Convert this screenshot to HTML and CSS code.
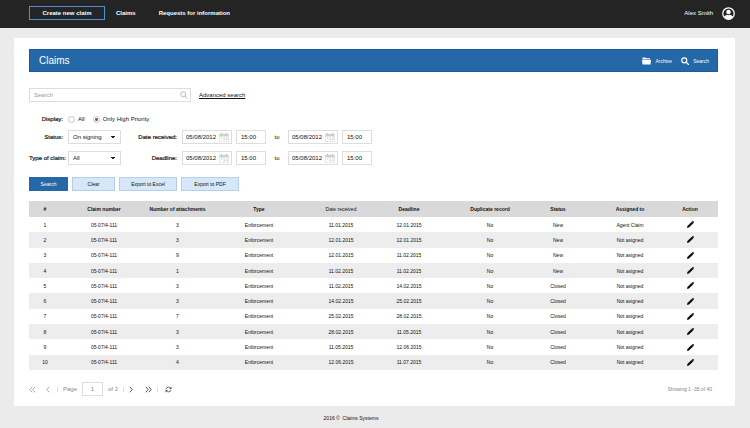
FILE: index.html
```html
<!DOCTYPE html>
<html lang="en">
<head>
  <meta charset="UTF-8">
  <meta name="viewport" content="width=device-width, initial-scale=1.0">
  <title>Claims</title>
  <link rel="stylesheet" href="styles.css">
</head>
<body>
  <!-- Shared icons -->
  <svg class="sprite" aria-hidden="true">
    <symbol id="magnifier" viewBox="0 0 16 16">
      <circle cx="6.5" cy="6.5" r="5" fill="none" stroke="currentColor"/>
      <path d="M10.2 10.2L15 15" stroke="currentColor" stroke-linecap="round"/>
    </symbol>
    <symbol id="calendar" viewBox="0 0 20 18">
      <path d="M1 2h18v15H1z" fill="#fff" stroke="#d0d0d0"/>
      <path d="M1 2h18v5H1z" fill="#d0d0d0"/>
      <path d="M5 0v3M15 0v3" stroke="#c4c4c4" stroke-width="2"/>
      <path d="M4 10h3M9 10h3M14 10h3M9 13h3M14 13h3" stroke="#ccc" stroke-width="2"/>
    </symbol>
    <symbol id="pencil" viewBox="0 0 16 16">
      <path d="M0.500 15.500L1.500 11.500 11 2 14 5 4.500 14zM11.800 1.500L13 0.500Q13.800 0 14.600 0.700L15.400 1.500Q16 2.300 15.400 3.100L14.500 4.200z" fill="#000" stroke="#000"/>
    </symbol>
    <symbol id="chevron" viewBox="0 0 8 14">
      <path d="M1.500 1.500L6.500 7l-5 5.500" fill="none" stroke="currentColor" stroke-width="2"/>
    </symbol>
    <symbol id="double-chevron" viewBox="0 0 14 14">
      <path d="M1.500 1.500L6.500 7l-5 5.500M7.500 1.500l5 5.500-5 5.500" fill="none" stroke="currentColor" stroke-width="2"/>
    </symbol>
  </svg>

  <header class="topbar">
    <nav class="nav">
      <a class="nav-create" href="#">Create new claim</a>
      <a class="nav-claims" href="#">Claims</a>
      <a href="#">Requests for information</a>
    </nav>
    <a class="user" href="#">
      <span>Alex Smith</span>
      <svg class="avatar" viewBox="0 0 26 26">
        <circle cx="13" cy="13" r="11.500" fill="none" stroke="#fff" stroke-width="2.500"/>
        <circle cx="13" cy="10" r="4.500" fill="#fff"/>
        <path d="M4 20q1-3 6-4.500 3 1.800 6 0 5 1.500 6 4.500-3.500 4.500-9 4.500T4 20z" fill="#fff"/>
      </svg>
    </a>
  </header>

  <main class="card">
    <div class="titlebar">
      <h1>Claims</h1>
      <a href="#">
        <svg class="folder" viewBox="0 0 18 15"><path d="M1 4V1.500Q1 0.500 2 0.500h4.500L8.500 2H15q1 0 1 1v1z" fill="#fff"/><path d="M0 5h18l-1 9.500H1z" fill="#fff"/></svg>
        Archive
      </a>
      <a href="#">
        <svg class="find"><use href="#magnifier"/></svg>
        Search
      </a>
    </div>

    <form id="claimsForm">
      <div class="search-row">
        <div class="box search-box">
          <input type="text" id="query" placeholder="Search" aria-label="Search">
          <svg class="glass"><use href="#magnifier"/></svg>
        </div>
        <a class="advanced" href="#">Advanced search</a>
      </div>

      <div class="filters">
        <span class="label">Display:</span>
        <div class="radios">
          <label><input type="radio" name="display"> All</label>
          <label><input type="radio" name="display" checked> Only High Priority</label>
        </div>

        <label class="label" for="status">Status:</label>
        <select class="box" id="status"><option>On signing</option></select>
        <label class="label" for="receivedFrom">Date received:</label>
        <div class="range">
          <div class="box date"><input type="text" id="receivedFrom" value="05/08/2012"><svg><use href="#calendar"/></svg></div>
          <input class="box time" type="text" value="15:00" aria-label="Received from time">
          <label class="to" for="receivedTo">to</label>
          <div class="box date"><input type="text" id="receivedTo" value="05/08/2012"><svg><use href="#calendar"/></svg></div>
          <input class="box time" type="text" value="15:00" aria-label="Received to time">
        </div>

        <label class="label" for="claimType">Type of claim:</label>
        <select class="box" id="claimType"><option>All</option></select>
        <label class="label" for="deadlineFrom">Deadline:</label>
        <div class="range">
          <div class="box date"><input type="text" id="deadlineFrom" value="05/08/2012"><svg><use href="#calendar"/></svg></div>
          <input class="box time" type="text" value="15:00" aria-label="Deadline from time">
          <label class="to" for="deadlineTo">to</label>
          <div class="box date"><input type="text" id="deadlineTo" value="05/08/2012"><svg><use href="#calendar"/></svg></div>
          <input class="box time" type="text" value="15:00" aria-label="Deadline to time">
        </div>
      </div>

      <div class="buttons">
        <button class="primary" type="submit">Search</button>
        <button type="reset">Clear</button>
        <button class="wide" type="button">Export to Excel</button>
        <button class="wide" type="button">Export to PDF</button>
      </div>
    </form>

    <table class="claims">
      <colgroup>
        <col class="c-num"><col class="c-claim"><col class="c-att"><col class="c-type"><col class="c-date">
        <col class="c-dead"><col class="c-dup"><col class="c-status"><col class="c-assigned"><col class="c-action">
      </colgroup>
      <thead>
        <tr><th>#</th><th>Claim number</th><th>Number of attachments</th><th>Type</th><th class="light">Date received</th><th>Deadline</th><th>Duplicate record</th><th>Status</th><th>Assigned to</th><th>Action</th></tr>
      </thead>
      <tbody id="rows"></tbody>
    </table>

    <div class="pager">
      <button class="off flip" type="button" aria-label="First page"><svg class="double"><use href="#double-chevron"/></svg></button>
      <button class="off flip prev" type="button" aria-label="Previous page"><svg class="single"><use href="#chevron"/></svg></button>
      <span class="sep"></span>
      <label for="page">Page</label>
      <input class="box page" type="text" id="page" value="1">
      <span>of 2</span>
      <span class="sep"></span>
      <button type="button" aria-label="Next page"><svg class="single"><use href="#chevron"/></svg></button>
      <button class="last" type="button" aria-label="Last page"><svg class="double"><use href="#double-chevron"/></svg></button>
      <span class="sep"></span>
      <button class="reload" type="button" aria-label="Refresh">
        <svg class="refresh" viewBox="0 0 14 14">
          <path d="M2 6.500Q2.500 2.500 7 2.200q2.500 0 4 2M12 7.500q-0.500 4-5 4.300-2.500 0-4-2" fill="none" stroke="currentColor" stroke-width="1.800"/>
          <path d="M13 1v5H8zM1 13V8h5z" fill="currentColor"/>
        </svg>
      </button>
      <span class="showing">Showing 1 -35 of 40</span>
    </div>
  </main>

  <footer class="footer">2016 ©&nbsp; Claims Systems</footer>

  <script src="script.js"></script>
</body>
</html>
```

FILE: styles.css
```css
* {
  box-sizing: border-box;
}

body {
  margin: 0;
  background-color: #ebebeb;
  color: #111;
  font-family: "Liberation Sans", Arial, sans-serif;
  font-size: 6px;
  line-height: 8px;
}

a {
  color: inherit;
  text-decoration: none;
}

input,
select,
button {
  font: inherit;
  color: inherit;
  margin: 0;
  padding: 0;
  border: none;
  background: none;
}

svg {
  display: block;
  flex: none;
}

.sprite {
  position: absolute;
  width: 0;
  height: 0;
}

/* Top bar */
.topbar {
  display: flex;
  align-items: center;
  justify-content: space-between;
  height: 28px;
  padding: 0 15px 2px 29px;
  background-color: #242424;
  color: #fff;
}

.nav {
  display: flex;
  align-items: center;
  font-weight: bold;
}

.nav-create {
  width: 76px;
  margin-right: 11px;
  padding: 2px 0;
  border: 1px solid #4a8fd8;
  text-align: center;
}

.nav-claims {
  margin-right: 23px;
}

.user {
  display: flex;
  align-items: center;
  gap: 9px;
}

.avatar {
  width: 13px;
  height: 13px;
}

/* Card */
.card {
  margin: 10px 15px 0 14px;
  padding: 11px 17px 10px 15px;
  background-color: #fff;
}

.titlebar {
  display: flex;
  align-items: center;
  gap: 9px;
  height: 23px;
  padding: 0 8px 0 9px;
  background-color: #2468a8;
  border: 1px solid #1b5c9c;
  color: #fff;
  font-size: 5px;
}

.titlebar h1 {
  margin: 0 auto 0 0;
  font-size: 10px;
  font-weight: normal;
}

.titlebar a {
  display: flex;
  align-items: center;
  gap: 4px;
}

.folder {
  width: 9px;
  height: 8px;
}

.find {
  width: 8px;
  height: 8px;
  stroke-width: 2.5px;
}

/* Form */
.box {
  height: 14px;
  border: 1px solid #ddd;
  background-color: #fff;
}

.search-row {
  display: flex;
  align-items: center;
  gap: 8px;
  margin-top: 16px;
}

.search-box {
  display: flex;
  align-items: center;
  width: 162px;
  padding: 0 2px 0 4px;
}

.search-box input {
  flex: 1;
  min-width: 0;
}

.search-box input::placeholder {
  color: #999;
}

.glass {
  width: 8px;
  height: 8px;
  color: #aaa;
  stroke-width: 1.5px;
}

.advanced {
  text-decoration: underline;
}

.filters {
  display: grid;
  grid-template-columns: 34px 53px 51px 1fr;
  column-gap: 5px;
  row-gap: 7px;
  align-items: center;
  margin-top: 13px;
}

.label {
  text-align: right;
  white-space: nowrap;
  -webkit-text-stroke: 0.2px #222;
}

.radios {
  display: flex;
  gap: 8px;
  grid-column: 2 / -1;
}

.radios label {
  display: flex;
  align-items: center;
  gap: 3px;
}

.radios input {
  appearance: none;
  width: 7px;
  height: 7px;
  border: 1px solid #c4c4c4;
  border-radius: 50%;
}

.radios input:checked {
  background: radial-gradient(#666 1px, #fff 2px);
}

select.box {
  appearance: none;
  width: 100%;
  padding-left: 4px;
  background: linear-gradient(#222, #222) no-repeat right 5px top 5px / 4px 1px, linear-gradient(#222, #222) no-repeat right 6px top 6px / 2px 1px;
}

.range {
  display: flex;
  align-items: center;
  gap: 4px;
}

.date {
  display: flex;
  align-items: center;
  width: 50px;
  padding: 0 2px 0 3px;
}

.date input {
  flex: 1;
  min-width: 0;
}

.date svg {
  width: 10px;
  height: 9px;
}

.time {
  width: 30px;
  padding-left: 4px;
}

.to {
  width: 14px;
  text-align: center;
}

.buttons {
  display: flex;
  gap: 4px;
  margin-top: 12px;
}

.buttons button {
  width: 43px;
  height: 14px;
  border: 1px solid #b4cfe6;
  background-color: #d6e8f8;
  font-size: 5px;
}

.buttons .primary {
  width: 39px;
  border-color: #2468a8;
  background-color: #2468a8;
  color: #fff;
}

.buttons .wide {
  width: 58px;
}

/* Table */
.claims {
  table-layout: fixed;
  width: 100%;
  height: 169px;
  margin-top: 10px;
  border-collapse: collapse;
  font-size: 5px;
  text-align: center;
}

.claims th,
.claims td {
  padding: 0;
  white-space: nowrap;
}

.claims th {
  height: 16px;
  background-color: #d9d9d9;
}

.claims .light {
  font-weight: normal;
}

.claims tbody tr:nth-child(even) {
  background-color: #ededee;
}

.claims th:last-child,
.claims td:last-child {
  padding-right: 16px;
}

.c-num { width: 32px; }
.c-claim { width: 86px; }
.c-att { width: 61px; }
.c-type { width: 102px; }
.c-date { width: 62px; }
.c-dead { width: 74px; }
.c-dup { width: 88px; }
.c-status { width: 48px; }
.c-assigned { width: 96px; }

.edit {
  display: block;
  margin: 0 auto;
}

.edit svg {
  width: 7px;
  height: 7px;
}

/* Pager */
.pager {
  display: flex;
  align-items: center;
  gap: 5px;
  margin-top: 12px;
  padding-right: 6px;
  color: #888;
}

.pager button {
  color: #555;
}

.pager .off {
  color: #aaa;
}

.flip {
  transform: rotate(180deg);
}

.pager .prev {
  margin: 0 2px 0 5px;
}

.pager .last {
  margin-left: 7px;
}

.pager .reload {
  margin-left: 2px;
}

.single {
  width: 4px;
  height: 7px;
}

.double,
.refresh {
  width: 7px;
  height: 7px;
}

.sep {
  width: 1px;
  height: 5px;
  background-color: #ddd;
}

.page {
  width: 21px;
  text-align: center;
}

.showing {
  margin-left: auto;
  font-size: 5px;
}

.footer {
  padding: 8px 48px 6px 0;
  font-size: 5px;
  text-align: center;
}
```

FILE: script.js
```js
const claims = [
  [3, "11.01.2015", "12.01.2015", "New", "Agent Claim"],
  [3, "12.01.2015", "12.01.2015", "New", "Not asigned"],
  [9, "12.01.2015", "11.02.2015", "New", "Not asigned"],
  [1, "11.02.2015", "11.02.2015", "New", "Not asigned"],
  [3, "11.02.2015", "14.02.2015", "Closed", "Not asigned"],
  [3, "14.02.2015", "25.02.2015", "Closed", "Not asigned"],
  [7, "25.02.2015", "28.02.2015", "Closed", "Not asigned"],
  [3, "28.02.2015", "11.05.2015", "Closed", "Not asigned"],
  [3, "11.05.2015", "12.06.2015", "Closed", "Not asigned"],
  [4, "12.06.2015", "11.07.2015", "Closed", "Not asigned"]
];

// Fill the table
const rows = document.getElementById("rows");
claims.forEach(function([attachments, received, deadline, status, assigned], i) {
  const cells = [i + 1, "05-07/4-111", attachments, "Enforcement", received, deadline, "No", status, assigned];
  rows.insertAdjacentHTML("beforeend",
    "<tr>" + cells.map(c => "<td>" + c + "</td>").join("") +
    '<td><button class="edit" type="button" aria-label="Edit"><svg><use href="#pencil"/></svg></button></td></tr>');
});

document.getElementById("claimsForm").addEventListener("submit", function(event) {
  event.preventDefault();
});
```
